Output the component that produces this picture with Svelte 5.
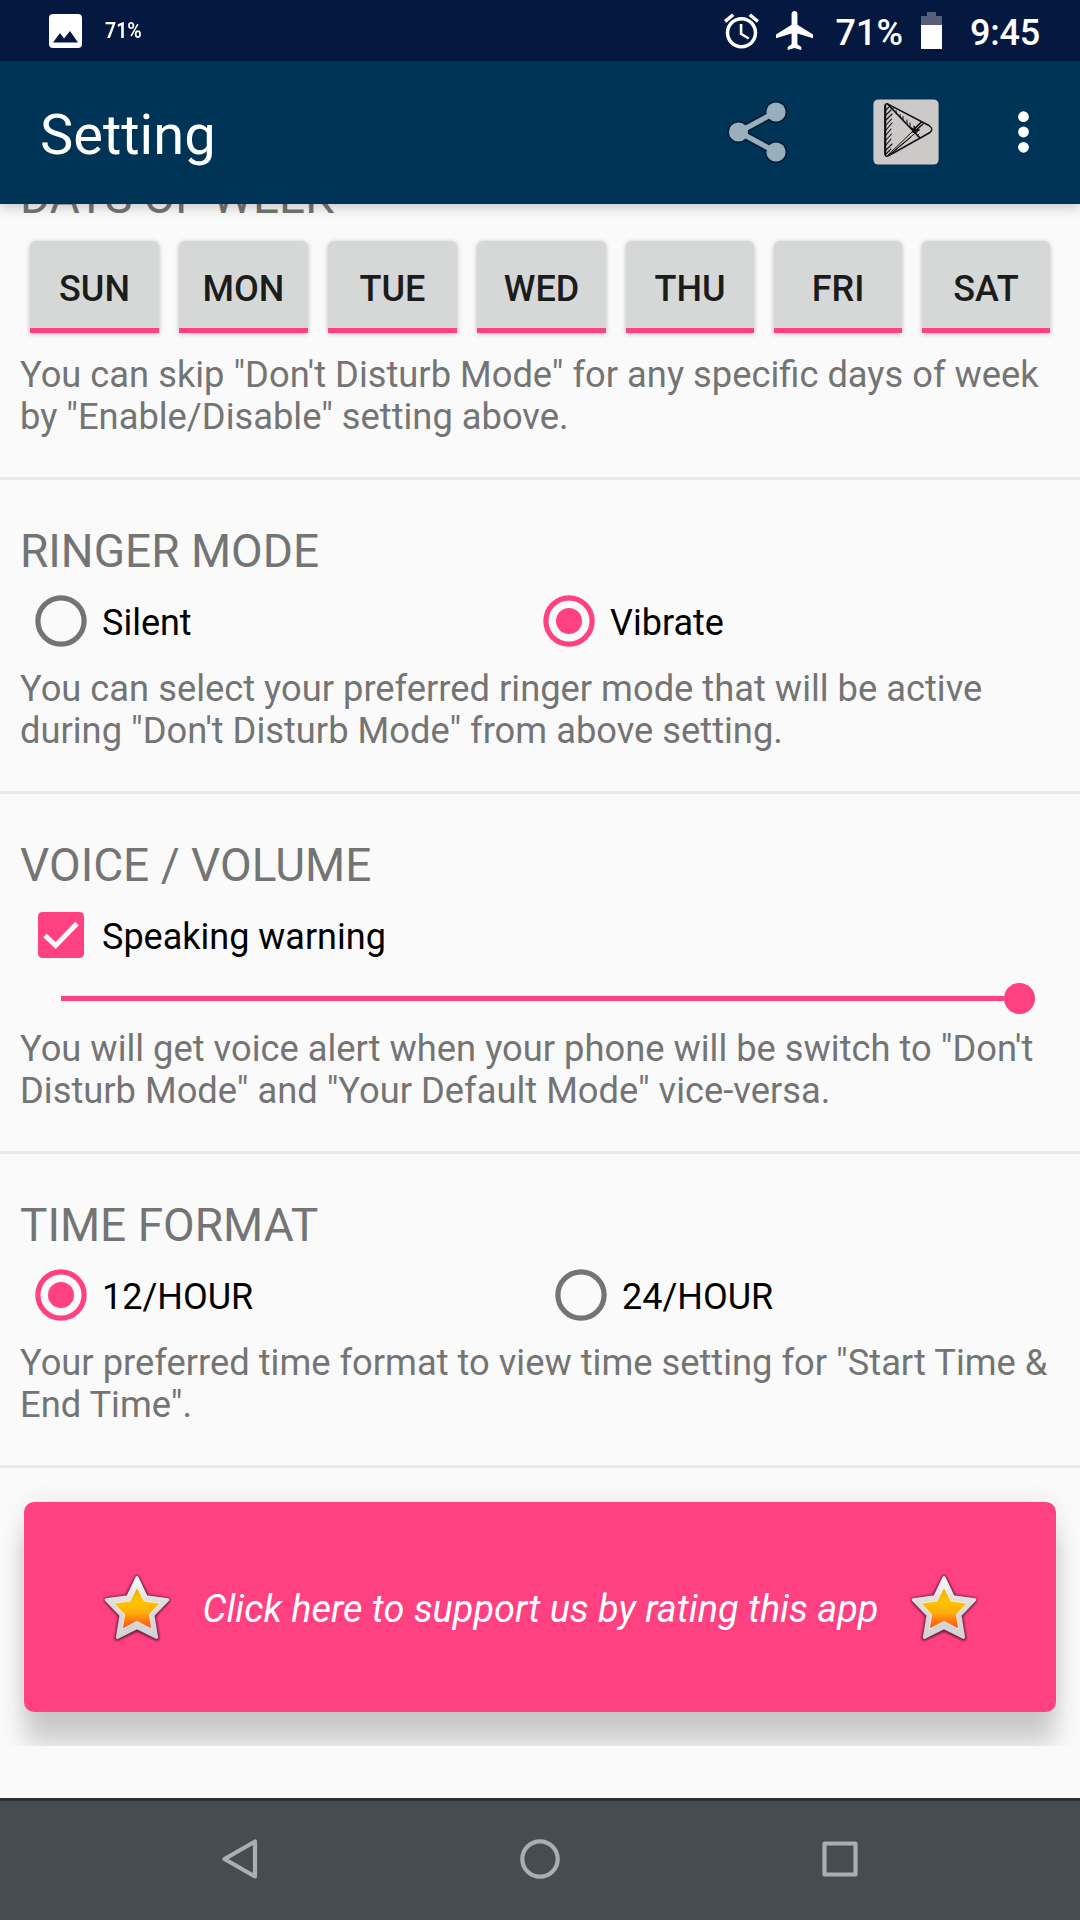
<script>
  const days = ['SUN', 'MON', 'TUE', 'WED', 'THU', 'FRI', 'SAT'];
  let ringer = $state('Vibrate');
  let format = $state('12/HOUR');
</script>

{#snippet radio(label, on)}
  <div class="option">
    <svg class="mark" viewBox="0 0 52 52" class:on>
      <circle cx="26" cy="26" r="23.1" fill="none" stroke="currentColor" stroke-width="5.2" />
      {#if on}<circle cx="26" cy="26" r="13" fill="currentColor" />{/if}
    </svg>
    <span>{label}</span>
  </div>
{/snippet}

{#snippet star()}
  <svg class="star" viewBox="0 0 68 68">
    <defs>
      <linearGradient id="gold" x1="0" y1="0" x2="0" y2="1">
        <stop offset="0" stop-color="#e8b000" />
        <stop offset=".35" stop-color="#ffc400" />
        <stop offset=".6" stop-color="#ffae08" />
        <stop offset="1" stop-color="#ff4a1c" />
      </linearGradient>
      <linearGradient id="silver" x1="0" y1="0" x2="0" y2="1">
        <stop offset="0" stop-color="#fbfbfb" />
        <stop offset=".4" stop-color="#dedede" />
        <stop offset="1" stop-color="#d2d2d2" />
      </linearGradient>
      <filter id="rim" x="-20%" y="-20%" width="140%" height="140%">
        <feGaussianBlur stdDeviation="1.1" />
      </filter>
    </defs>
    <g stroke-linejoin="round">
      <path d="M34 4.500L43.500 23L64 26.300L50 41.500L53.500 63.500L34 54.500L14.500 63.500L18 41.500L4 26.300L24.500 23Z" fill="#3c1230" stroke="#3c1230" stroke-width="4.500" opacity=".8" filter="url(#rim)" />
      <path d="M34 4.500L43 23.200L64 26L49.500 41L53 62.500L34 53L15 62.500L18.500 41L4 26L25 23.200Z" fill="url(#silver)" stroke="url(#silver)" stroke-width="3" />
      <path d="M34 14L40.800 27.200L56.500 29.300L46 40.300L48.300 54.500L34 47L19.700 54.500L22 40.300L11.500 29.300L27.200 27.200Z" fill="url(#gold)" stroke="#f6f2e8" stroke-width=".8" />
    </g>
  </svg>
{/snippet}

<div class="screen">
  <header class="status">
    <svg class="photo" viewBox="0 0 33 34">
      <rect width="33" height="34" rx="4" fill="#fff" />
      <path d="M4 28.500L11 19L15 24.500L21 17L29 28.500Z" fill="#06183f" />
    </svg>
    <span class="tiny">71%</span>
    <span class="grow"></span>
    <svg class="alarm" viewBox="2 1.86 20 20.140" fill="#fff">
      <path d="M22 5.720l-4.600-3.860-1.290 1.530 4.600 3.860L22 5.720zM7.880 3.390L6.600 1.860 2 5.710l1.290 1.530 4.590-3.850zM12.500 8H11v6l4.750 2.850.75-1.230-4-2.370V8zM12 4c-4.970 0-9 4.030-9 9s4.020 9 9 9c4.970 0 9-4.030 9-9s-4.030-9-9-9zm0 16c-3.870 0-7-3.130-7-7s3.130-7 7-7 7 3.130 7 7-3.130 7-7 7z" />
    </svg>
    <svg class="plane" viewBox="2 2 19 20" fill="#fff">
      <path d="M21 16v-2l-8-5V3.500c0-.83-.67-1.500-1.500-1.500S10 2.670 10 3.500V9l-8 5v2l8-2.500V19l-2 1.500V22l3.500-1 3.500 1v-1.500L13 19v-5.500l8 2.500z" />
    </svg>
    <span class="pct">71%</span>
    <svg class="battery" viewBox="0 0 21 37">
      <path d="M6 0h9v4h6v9H0V4h6z" fill="#555f7b" />
      <path d="M0 13h21v24H0z" fill="#fff" />
    </svg>
    <span class="clock">9:45</span>
  </header>

  <nav class="appbar">
    <h1>Setting</h1>
    <svg class="share" viewBox="0 0 62 64">
      <g fill="#00213c" stroke="#00213c">
        <path d="M49 12L12 32L49 52" fill="none" stroke-width="9" />
        <circle cx="49" cy="12" r="11" /><circle cx="11.500" cy="32" r="11" /><circle cx="49" cy="52" r="11" />
      </g>
      <g fill="#9aafbe">
        <path d="M49 12L12 32L49 52" fill="none" stroke="#9aafbe" stroke-width="5.200" />
        <circle cx="49" cy="12" r="9.600" /><circle cx="11.500" cy="32" r="9.600" /><circle cx="49" cy="52" r="9.600" />
      </g>
    </svg>
    <svg class="play" viewBox="0 0 66 66">
      <rect x=".4" y=".4" width="65.200" height="65.200" rx="5" fill="#cdc9c9" />
      <g fill="none" stroke="#111" stroke-linecap="round" stroke-linejoin="round">
        <path d="M12 7Q12 4.500 14.500 4.800L56 26.500Q61 30 57 33.500L16 56.500Q12 58.500 12 55Z" stroke-width="1.500" />
        <path d="M12.300 7V55" stroke-width="2" />
        <path d="M14.500 5L46.500 38.500" stroke-width="1.700" />
        <path d="M14 57L41 31L48 23M16 56L46 31M18 55L38 38" stroke-width="1" />
        <path d="M40 31L48 23.500M41 33L50 25M38 29L43 32L41 27.500M40 33L46 31" stroke-width="1.600" />
        <path d="M13 11L16 8M13 16L18 11M13 21L19 15M13 26L18.500 20M13 31L19 24M13 36L18 30M13 41L18.500 35M13 46L18 40M13 51L19 45M13 55L18 50" stroke-width="1.100" />
        <path d="M20 11V9M23.500 15L23 11.500M27 18.500V15.500M30 22V17.500M34 25.500V21M37 28V24M42 34L44 33M44 37L46 35" stroke-width="1" />
      </g>
    </svg>
    <svg class="more" viewBox="0 0 11 42" fill="#fff">
      <circle cx="5.500" cy="5.700" r="5.400" /><circle cx="5.500" cy="21" r="5.400" /><circle cx="5.500" cy="36.300" r="5.400" />
    </svg>
  </nav>

  <main>
    <section class="days-section">
      <h2>DAYS OF WEEK</h2>
      <div class="days">
        {#each days as day}<button class="day">{day}</button>{/each}
      </div>
      <p>You can skip "Don't Disturb Mode" for any specific days of week<br />by "Enable/Disable" setting above.</p>
    </section>

    <section>
      <h2>RINGER MODE</h2>
      <div class="options ringer">
        {@render radio('Silent', ringer === 'Silent')}
        {@render radio('Vibrate', ringer === 'Vibrate')}
      </div>
      <p>You can select your preferred ringer mode that will be active<br />during "Don't Disturb Mode" from above setting.</p>
    </section>

    <section>
      <h2>VOICE / VOLUME</h2>
      <div class="options">
        <div class="option">
          <svg class="mark on" viewBox="0 0 52 52">
            <rect x="3" y="3" width="46" height="46" rx="4.500" fill="currentColor" />
            <path d="M10 26.500L20.700 36.500L42 14.500" fill="none" stroke="#fafafa" stroke-width="5" />
          </svg>
          <span>Speaking warning</span>
        </div>
      </div>
      <div class="slider"><span class="track"></span><span class="thumb"></span></div>
      <p>You will get voice alert when your phone will be switch to "Don't<br />Disturb Mode" and "Your Default Mode" vice-versa.</p>
    </section>

    <section>
      <h2>TIME FORMAT</h2>
      <div class="options format">
        {@render radio('12/HOUR', format === '12/HOUR')}
        {@render radio('24/HOUR', format === '24/HOUR')}
      </div>
      <p>Your preferred time format to view time setting for "Start Time &amp;<br />End Time".</p>
    </section>

    <div class="support">
      <button class="rate">
        {@render star()}
        <span>Click here to support us by rating this app</span>
        {@render star()}
      </button>
    </div>
  </main>

  <footer>
    <svg viewBox="0 0 40 40"><path d="M4.500 20L35 2.500V37.500Z" /></svg>
    <svg viewBox="0 0 40 40"><circle cx="20" cy="20" r="17.700" /></svg>
    <svg viewBox="0 0 40 40"><rect x="4.500" y="4.500" width="31" height="31" rx=".5" /></svg>
  </footer>
</div>

<style>
  :global(body) {
    margin: 0;
    background: #fafafa;
  }
  .screen {
    width: 1080px;
    height: 1920px;
    display: flex;
    flex-direction: column;
    overflow: hidden;
    background: #fafafa;
    font-family: Roboto, sans-serif;
    font-size: 36px;
    line-height: 42px;
    color: #000;
  }
  svg {
    display: block;
    flex: none;
  }
  h1, h2, p {
    margin: 0;
    font-weight: 400;
  }
  button {
    border: 0;
    padding: 0;
    font: inherit;
  }
  .grow { flex: 1; }

  .status {
    height: 61px;
    box-sizing: border-box;
    padding: 0 40px 0 49px;
    display: flex;
    align-items: center;
    background: #05183f;
    color: #fff;
    font-weight: 500;
    white-space: nowrap;
  }
  .photo { width: 33px; height: 34px; }
  .tiny {
    margin-left: 23px;
    font-size: 22px;
    font-weight: 600;
    line-height: 26px;
    transform: scaleX(.89);
    transform-origin: left;
  }
  .alarm { width: 35px; height: 36px; margin-right: 17px; }
  .plane { width: 37px; height: 39px; margin-right: 22px; }
  .pct, .clock { padding-top: 5px; }
  .battery { width: 21px; height: 37px; margin: 0 28px 0 18px; }
  .clock { letter-spacing: -.2px; }

  .appbar {
    position: relative;
    z-index: 1;
    height: 143px;
    box-sizing: border-box;
    padding: 0 51px 1px 40px;
    display: flex;
    align-items: center;
    background: #003457;
    box-shadow: 0 3px 12px rgba(0, 0, 0, .22);
  }
  h1 {
    flex: 1;
    padding-top: 5px;
    font-size: 56px;
    line-height: 64px;
    color: #fff;
  }
  .share { width: 62px; height: 64px; margin-right: 84px; }
  .play { width: 66px; height: 66px; margin-right: 79px; }
  .more { width: 11px; height: 42px; }

  main {
    flex: 1;
    overflow: hidden;
  }
  section {
    padding: 44px 0 39px;
    border-bottom: 3px solid #e9e9e9;
    color: #747474;
  }
  .days-section { margin-top: -78px; }
  h2 {
    padding-left: 20px;
    font-size: 46px;
    line-height: 54px;
  }
  p {
    margin-top: 4px;
    padding-left: 20px;
    font-size: 36.3px;
    white-space: nowrap;
  }
  .days {
    display: grid;
    grid-template-columns: repeat(4, 129px) repeat(3, 128px);
    gap: 20px;
    margin: 17px 30px 21px;
  }
  .day {
    height: 92px;
    box-sizing: border-box;
    padding-top: 9px;
    border-bottom: 5px solid #ff4081;
    border-radius: 6px 6px 0 0;
    background: #d6d8d7;
    box-shadow: 0 1px 5px rgba(0, 0, 0, .25);
    color: #1c1c1c;
    font-weight: 500;
  }
  .options {
    height: 86px;
    padding-left: 35px;
    display: grid;
    align-items: center;
    color: #000;
  }
  .ringer { grid-template-columns: 508px 1fr; }
  .format { grid-template-columns: 520px 1fr; }
  .option {
    display: flex;
    align-items: center;
    gap: 15px;
  }
  .option span { padding-top: 4px; }
  .mark {
    width: 52px;
    height: 52px;
    color: #747474;
  }
  .mark.on { color: #ff4081; }
  .slider {
    height: 41px;
    margin: 0 45.5px 9px 61px;
    display: flex;
    align-items: center;
  }
  .track {
    flex: 1;
    height: 5px;
    background: #ff4081;
  }
  .thumb {
    width: 31px;
    height: 31px;
    border-radius: 50%;
    background: #ff4081;
  }
  .support {
    height: 278px;
    box-sizing: border-box;
    padding: 34px 24px;
    overflow: hidden;
  }
  .rate {
    width: 100%;
    height: 210px;
    box-sizing: border-box;
    padding: 2px 0 0 1px;
    display: flex;
    align-items: center;
    justify-content: center;
    gap: 31px;
    border-radius: 10px;
    background: #ff4081;
    box-shadow: 0 32px 24px rgba(0, 0, 0, .18), 0 0 24px rgba(0, 0, 0, .08);
    color: #fff;
    font-size: 37.84px;
    font-style: italic;
    line-height: 44px;
    white-space: nowrap;
  }
  .rate span { padding-top: 2px; }
  .star { width: 70px; height: 70px; }

  footer {
    height: 122px;
    box-sizing: border-box;
    border-top: 3px solid #2c3234;
    padding: 0 220px 3px;
    display: flex;
    align-items: center;
    justify-content: space-between;
    background: #454d53;
  }
  footer svg {
    width: 40px;
    height: 40px;
    fill: none;
    stroke: #aaaeb1;
    stroke-width: 4.200;
    stroke-linejoin: round;
  }
</style>
